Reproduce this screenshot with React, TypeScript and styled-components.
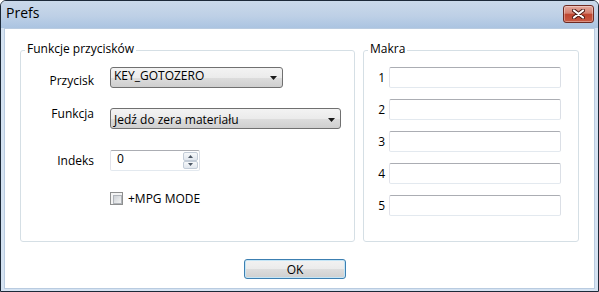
import React from "react";
import styled, { createGlobalStyle } from "styled-components";

const GlobalStyle = createGlobalStyle`
  html, body {
    margin: 0;
    padding: 0;
    background: #fff;
  }
  body {
    font-family: "Open Sans", "Liberation Sans", sans-serif;
    font-size: 12px;
    color: #000;
  }
  * {
    box-sizing: border-box;
  }
`;

const Window = styled.div`
  width: 599px;
  height: 292px;
  display: flex;
  flex-direction: column;
  border: 1px solid #1c2938;
  border-radius: 6px 6px 0 0;
  background: #d5e3f2;
  overflow: hidden;
`;

const TitleBar = styled.div`
  height: 27px;
  flex: none;
  display: flex;
  align-items: flex-start;
  justify-content: space-between;
  padding: 0 4px 0 5px;
  background: linear-gradient(to bottom, #cad9ea 0%, #bed0e6 55%, #abc4e1 100%);
`;

const Title = styled.span`
  margin-top: 3px;
  font-size: 14px;
  line-height: 18px;
  color: #000;
`;

const CloseButton = styled.div`
  margin-top: 4px;
  width: 31px;
  height: 18px;
  display: flex;
  align-items: center;
  justify-content: center;
  border: 1px solid #6e2a22;
  border-radius: 3px;
  background: linear-gradient(to bottom, #e4a89d 0%, #d4806f 45%, #bf4630 52%, #c95a43 100%);
  box-shadow: inset 0 0 0 1px rgba(255, 255, 255, 0.35);
`;

const ClientFrame = styled.div`
  flex: 1;
  display: flex;
  padding: 0 3px 2px 3px;
`;

const Client = styled.div`
  flex: 1;
  display: flex;
  flex-direction: column;
  border: 1px solid #b9cbe0;
  background: #fff;
  padding: 21px 15px 9px 15px;
`;

const Groups = styled.div`
  display: flex;
  gap: 8px;
  height: 192px;
`;

const Group = styled.div<{ $w: number }>`
  position: relative;
  width: ${(p) => p.$w}px;
  height: 100%;
  border: 1px solid #d5dfe5;
  border-radius: 3px;
`;

const Legend = styled.span`
  position: absolute;
  top: -10px;
  left: 4px;
  padding: 0 2px;
  background: #fff;
  line-height: 15px;
`;

const Form = styled.div`
  display: flex;
  flex-direction: column;
  padding-top: 16px;
`;

const Row = styled.div<{ $top?: number }>`
  display: flex;
  align-items: flex-start;
  margin-top: ${(p) => p.$top ?? 0}px;
`;

const Label = styled.span<{ $shift: number }>`
  width: 73px;
  margin-right: 16px;
  margin-top: ${(p) => p.$shift}px;
  text-align: right;
  line-height: 15px;
`;

const Combo = styled.div<{ $w: number; $pt: number }>`
  width: ${(p) => p.$w}px;
  height: 21px;
  display: flex;
  justify-content: space-between;
  padding: ${(p) => p.$pt}px 0 0 3px;
  border: 1px solid #707070;
  border-radius: 3px;
  background: linear-gradient(to bottom, #f3f3f3 0%, #ebebeb 50%, #dddddd 51%, #cfcfcf 100%);
  line-height: 15px;
`;

const ComboArrow = styled.svg`
  align-self: center;
  margin-right: 5px;
`;

const SpinBox = styled.div`
  width: 90px;
  height: 21px;
  display: flex;
  justify-content: space-between;
  padding: 0 1px 0 6px;
  border: 1px solid;
  border-color: #abadb3 #dbdfe6 #e3e9ef #e2e3ea;
  border-radius: 2px;
  background: #fff;
  line-height: 15px;
`;

const SpinButtons = styled.div`
  width: 15px;
  display: flex;
  flex-direction: column;
  margin: 1px 0;
`;

const SpinButton = styled.div`
  flex: 1;
  display: flex;
  align-items: center;
  justify-content: center;
  border: 1px solid #c3ccd7;
  border-radius: 2px;
  background: linear-gradient(to bottom, #f6f8fa 0%, #e1e7ee 100%);
`;

const CheckRow = styled.div`
  display: flex;
  align-items: center;
  gap: 5px;
  margin-top: 20px;
  padding-left: 89px;
  line-height: 15px;
`;

const CheckBox = styled.div`
  width: 13px;
  height: 13px;
  border: 1px solid #8e8f8f;
  background: #f4f4f4;
  padding: 2px;
  &::after {
    content: "";
    display: block;
    width: 100%;
    height: 100%;
    border: 1px solid #b0b4ba;
    background: linear-gradient(135deg, #cdd1d6 0%, #f3f3f3 100%);
  }
`;

const Macros = styled.div`
  display: flex;
  flex-direction: column;
  gap: 11px;
  padding-top: 16px;
`;

const MacroRow = styled.div`
  display: flex;
  align-items: center;
`;

const MacroNum = styled.span`
  width: 21px;
  margin-right: 4px;
  text-align: right;
  line-height: 15px;
`;

const TextBox = styled.div`
  width: 172px;
  height: 21px;
  border: 1px solid;
  border-color: #abadb3 #dbdfe6 #e3e9ef #e2e3ea;
  border-radius: 2px;
  background: #fff;
`;

const ButtonRow = styled.div`
  display: flex;
  margin-top: 17px;
  padding-left: 224px;
`;

const PushButton = styled.div`
  width: 102px;
  height: 20px;
  display: flex;
  align-items: center;
  justify-content: center;
  border: 1px solid #3c7fb1;
  border-radius: 3px;
  background: linear-gradient(to bottom, #f2f2f2 0%, #ebebeb 50%, #dddddd 51%, #cfcfcf 100%);
  box-shadow: inset 0 0 0 1px #c4e5f6;
  line-height: 15px;
`;

function DownArrow() {
  return (
    <ComboArrow width="7" height="4" viewBox="0 0 7 4">
      <path d="M0 0 H7 L3.5 4 Z" fill="#1a1a1a" />
    </ComboArrow>
  );
}

function App() {
  return (
    <>
      <GlobalStyle />
      <Window>
        <TitleBar>
          <Title>Prefs</Title>
          <CloseButton>
            <svg width="13" height="10" viewBox="0 0 13 10">
              <path d="M2 1.5 L11 8.5 M11 1.5 L2 8.5" stroke="#4a1a14" strokeWidth="4" strokeLinecap="round" />
              <path d="M2 1.5 L11 8.5 M11 1.5 L2 8.5" stroke="#fff" strokeWidth="2.2" strokeLinecap="round" />
            </svg>
          </CloseButton>
        </TitleBar>
        <ClientFrame>
          <Client>
            <Groups>
              <Group $w={335}>
                <Legend>Funkcje przycisków</Legend>
                <Form>
                  <Row>
                    <Label $shift={6}>Przycisk</Label>
                    <Combo $w={173} $pt={0}>
                      KEY_GOTOZERO
                      <DownArrow />
                    </Combo>
                  </Row>
                  <Row $top={20}>
                    <Label $shift={-2}>Funkcja</Label>
                    <Combo $w={231} $pt={3}>
                      Jedź do zera materiału
                      <DownArrow />
                    </Combo>
                  </Row>
                  <Row $top={21}>
                    <Label $shift={3}>Indeks</Label>
                    <SpinBox>
                      0
                      <SpinButtons>
                        <SpinButton>
                          <svg width="5" height="3" viewBox="0 0 5 3">
                            <path d="M0 3 H5 L2.5 0 Z" fill="#4d5866" />
                          </svg>
                        </SpinButton>
                        <SpinButton>
                          <svg width="5" height="3" viewBox="0 0 5 3">
                            <path d="M0 0 H5 L2.5 3 Z" fill="#4d5866" />
                          </svg>
                        </SpinButton>
                      </SpinButtons>
                    </SpinBox>
                  </Row>
                  <CheckRow>
                    <CheckBox />
                    +MPG MODE
                  </CheckRow>
                </Form>
              </Group>
              <Group $w={216}>
                <Legend>Makra</Legend>
                <Macros>
                  {[1, 2, 3, 4, 5].map((n) => (
                    <MacroRow key={n}>
                      <MacroNum>{n}</MacroNum>
                      <TextBox />
                    </MacroRow>
                  ))}
                </Macros>
              </Group>
            </Groups>
            <ButtonRow>
              <PushButton>OK</PushButton>
            </ButtonRow>
          </Client>
        </ClientFrame>
      </Window>
    </>
  );
}

export default App;
